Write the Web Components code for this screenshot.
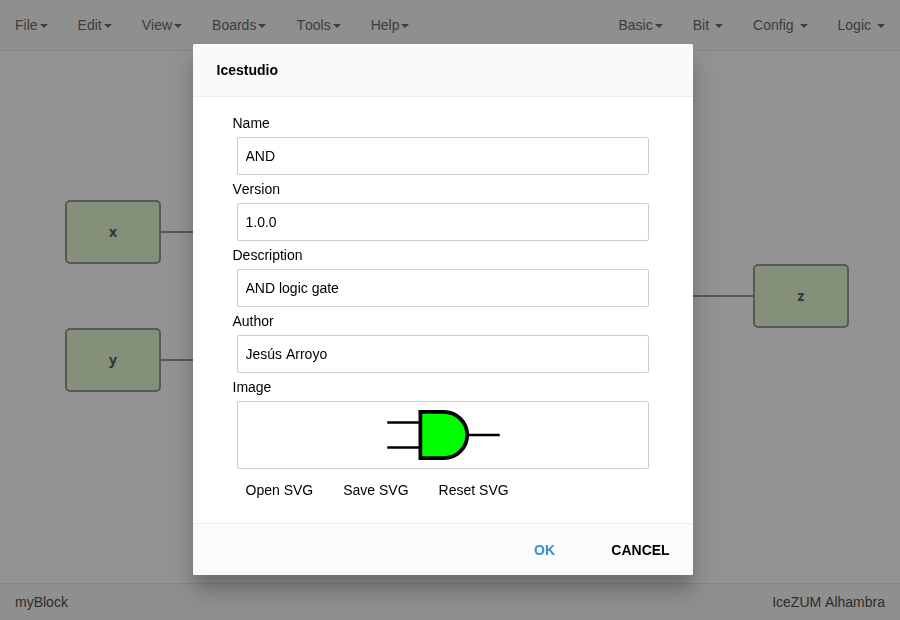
<!DOCTYPE html>
<html lang="en">
<head>
<meta charset="utf-8">
<meta name="viewport" content="width=device-width, initial-scale=1">
<title>Icestudio</title>
<style>
  html, body { height: 100%; }
  body {
    margin: 0;
    overflow: hidden;
    background: #fff;
    color: #333;
    font: 14px/20px "Liberation Sans", Arial, sans-serif;
    font-kerning: none;
  }
</style>
</head>
<body>
<ice-app></ice-app>
<script>
  function define(name, html, setup) {
    const template = document.createElement('template');
    template.innerHTML = html;
    customElements.define(name, class extends HTMLElement {
      constructor() {
        super();
        this.attachShadow({ mode: 'open' }).append(template.content.cloneNode(true));
      }
      connectedCallback() {
        if (setup) setup(this, this.shadowRoot);
      }
    });
  }

  define('menu-item', `
    <style>
      :host { display: block; }
      button {
        display: flex;
        align-items: center;
        gap: var(--caret-gap, 2px);
        padding: 15px;
        border: 0;
        background: none;
        color: #555;
        font: inherit;
        cursor: pointer;
      }
      i {
        margin-top: 2px;
        border: 4px solid transparent;
        border-top-color: currentColor;
        border-bottom: 0;
      }
    </style>
    <button type="button" aria-haspopup="menu"><slot></slot><i></i></button>`);

  define('menu-bar', `
    <style>
      :host { display: block; background: #f8f8f8; border-bottom: 1px solid #e7e7e7; }
      nav, .group { display: flex; }
      nav { justify-content: space-between; }
      .spaced { --caret-gap: 6px; }
    </style>
    <nav>
      <div class="group">
        <menu-item>File</menu-item>
        <menu-item>Edit</menu-item>
        <menu-item>View</menu-item>
        <menu-item>Boards</menu-item>
        <menu-item>Tools</menu-item>
        <menu-item>Help</menu-item>
      </div>
      <div class="group">
        <menu-item>Basic</menu-item>
        <menu-item class="spaced">Bit</menu-item>
        <menu-item class="spaced">Config</menu-item>
        <menu-item class="spaced">Logic</menu-item>
      </div>
    </nav>`);

  define('block-node', `
    <style>
      :host {
        display: flex;
        align-items: center;
        justify-content: center;
        box-sizing: border-box;
        width: 96px;
        height: 64px;
        border: 2px solid #8b8b8b;
        border-radius: 5px;
        background: #e3fbcd;
        color: #444;
        font-family: "Open Sans", "Noto Sans", sans-serif;
        font-weight: 700;
      }
    </style>
    <slot></slot>`);

  /* Free canvas: nodes and wires sit at the diagram's own coordinates. */
  define('design-canvas', `
    <style>
      :host { display: block; position: relative; overflow: hidden; }
      svg { position: absolute; inset: 0; width: 100%; height: 100%; }
      block-node { position: absolute; }
      .x { left: 65px; top: 149px; }
      .y { left: 65px; top: 277px; }
      .z { left: 753px; top: 213px; }
    </style>
    <svg aria-hidden="true" fill="none" stroke="#8b8b8b" stroke-width="2">
      <path d="M160 181H400M160 309H400M500 245H754"/>
    </svg>
    <block-node class="x">x</block-node>
    <block-node class="y">y</block-node>
    <block-node class="z">z</block-node>`);

  define('status-bar', `
    <style>
      :host {
        display: flex;
        justify-content: space-between;
        padding: 8px 15px;
        background: #f8f8f8;
        border-top: 1px solid #e7e7e7;
      }
    </style>
    <slot name="project"></slot>
    <slot name="board"></slot>`);

  define('text-field', `
    <style>
      :host { display: block; }
      label { display: block; }
      input {
        display: block;
        box-sizing: border-box;
        width: calc(100% - 8px);
        height: 38px;
        margin: 4px;
        padding: 8px;
        border: 1px solid #ccc;
        border-radius: 2px;
        background: #fff;
        color: #000;
        font: inherit;
        outline: 0;
      }
    </style>
    <label for="field"></label>
    <input id="field" type="text">`,
    (host, root) => {
      root.querySelector('label').textContent = host.getAttribute('label');
      root.querySelector('input').value = host.getAttribute('value');
    });

  define('gate-image', `
    <style>
      :host {
        display: flex;
        align-items: center;
        justify-content: center;
        height: 66px;
        border: 1px solid #ccc;
        border-radius: 2px;
      }
    </style>
    <svg width="126" height="64" viewBox="-0.8 -0.6 100.8 51.2" role="img" aria-label="AND gate" stroke="#000" fill="none">
      <path stroke-width="2" d="M70 25h25M31 15H5M32 35H5"/>
      <path stroke-width="3" fill="#0f0" d="M31.5 6.5V43.5H50C60.5 43.5 69 35.2 69 25S60.5 6.5 50 6.5Z"/>
    </svg>`);

  define('project-dialog', `
    <style>
      :host {
        display: block;
        max-width: 500px;
        margin: 0 auto;
        border-radius: 2px;
        background: #fff;
        color: #000;
        box-shadow: 0 15px 20px 0 rgba(0, 0, 0, .25);
      }
      header, footer { background: #fafafa; }
      header { padding: 16px 24px; border-bottom: 1px solid #eee; border-radius: 2px 2px 0 0; }
      h1 { margin: 0; font: inherit; font-weight: 700; }
      .body { padding: 16px 40px 23px; }
      gate-image { margin: 4px; }
      .actions { display: flex; gap: 30px; padding: 7px 13px 0; }
      button { border: 0; background: none; color: inherit; font: inherit; cursor: pointer; }
      .actions button { padding: 0; }
      footer {
        display: flex;
        justify-content: flex-end;
        gap: 8px;
        padding: 8px;
        border-top: 1px solid #eee;
        border-radius: 0 0 2px 2px;
        background: #fbfbfb;
      }
      footer button { min-width: 88px; height: 35px; padding: 0; font-weight: 700; }
      .ok { color: #3593d2; }
    </style>
    <section role="dialog" aria-modal="true" aria-labelledby="title">
      <header><h1 id="title">Icestudio</h1></header>
      <div class="body">
        <text-field label="Name" value="AND"></text-field>
        <text-field label="Version" value="1.0.0"></text-field>
        <text-field label="Description" value="AND logic gate"></text-field>
        <text-field label="Author" value="Jesús Arroyo"></text-field>
        <div>Image</div>
        <gate-image></gate-image>
        <div class="actions">
          <button type="button">Open SVG</button>
          <button type="button">Save SVG</button>
          <button type="button">Reset SVG</button>
        </div>
      </div>
      <footer>
        <button type="button" class="ok">OK</button>
        <button type="button">CANCEL</button>
      </footer>
    </section>`);

  define('ice-app', `
    <style>
      :host { display: flex; flex-direction: column; height: 100%; }
      design-canvas { flex: 1; }
      .overlay {
        position: fixed;
        inset: 0;
        padding: 44px 15px 0 0;
        background: rgba(37, 37, 37, .5);
      }
    </style>
    <menu-bar></menu-bar>
    <design-canvas></design-canvas>
    <status-bar>
      <span slot="project">myBlock</span>
      <span slot="board">IceZUM Alhambra</span>
    </status-bar>
    <div class="overlay"><project-dialog></project-dialog></div>`);
</script>
</body>
</html>
